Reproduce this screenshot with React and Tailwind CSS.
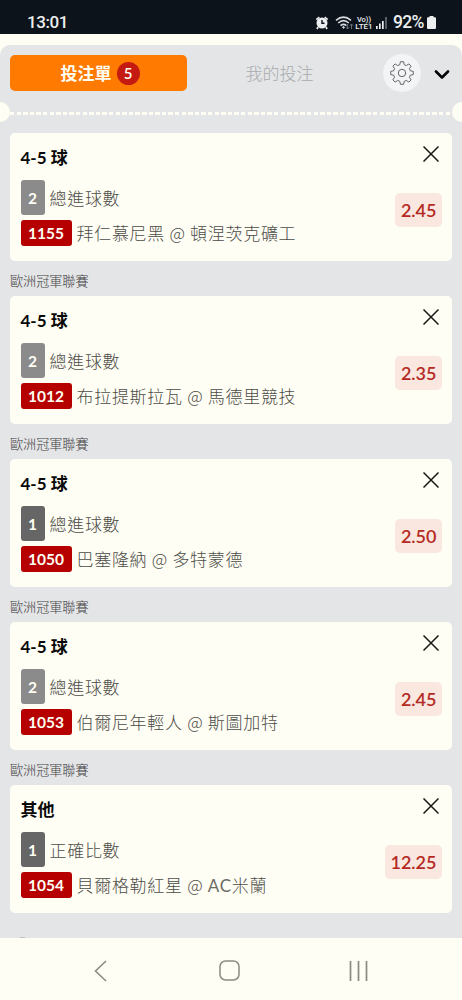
const bets = [
  { title: '4-5 球', count: 2, market: '總進球數', id: '1155', home: '拜仁慕尼黑', away: '頓涅茨克礦工', odds: '2.45' },
  { title: '4-5 球', count: 2, market: '總進球數', id: '1012', home: '布拉提斯拉瓦', away: '馬德里競技', odds: '2.35' },
  { title: '4-5 球', count: 1, market: '總進球數', id: '1050', home: '巴塞隆納', away: '多特蒙德', odds: '2.50' },
  { title: '4-5 球', count: 2, market: '總進球數', id: '1053', home: '伯爾尼年輕人', away: '斯圖加特', odds: '2.45' },
  { title: '其他', count: 1, market: '正確比數', id: '1054', home: '貝爾格勒紅星', away: 'AC米蘭', odds: '12.25' },
];

function gearPath() {
  const teeth = 8;
  const points = [];
  for (let i = 0; i < teeth; i++) {
    const base = (i * 360) / teeth;
    for (const [offset, r] of [[-15, 8.6], [-8, 11.4], [8, 11.4], [15, 8.6]]) {
      const a = ((base + offset) * Math.PI) / 180;
      points.push(`${(12 + r * Math.sin(a)).toFixed(2)} ${(12 - r * Math.cos(a)).toFixed(2)}`);
    }
  }
  return `M${points.join('L')}Z`;
}

function StatusBar() {
  return (
    <header className="flex h-[34px] shrink-0 items-start justify-between bg-[#0c131b] pt-[11px] pr-[26px] pl-[27px] font-['Roboto',sans-serif] text-[#eceeef]">
      <span className="text-[17px] leading-[23px] font-medium tracking-[-0.4px]">13:01</span>
      <div className="flex h-[23px] items-center">
        <svg className="mr-[6px]" width="14" height="14" viewBox="0 0 13 14" fill="none">
          <circle cx="6.5" cy="7" r="5.5" fill="#eceeef" />
          <path d="M.8 3.6 3.8 1.2M12.2 3.6 9.2 1.2M2.5 11 1.5 13M10.5 11l1 2" stroke="#eceeef" strokeWidth="1.7" />
          <path d="M6.5 4v3.3H9" stroke="#0c131b" strokeWidth="1.4" />
        </svg>
        <svg className="mr-[2px]" width="19" height="16" viewBox="0 0 19 16" fill="none" stroke="#d9dcde">
          <path d="M1 5.3Q8.5-1 16 5.3M3.2 8Q8.5 3.4 13.8 8M5.5 10.6Q8.5 8.2 11.4 10.6" strokeWidth="1.6" />
          <circle cx="8.5" cy="12.4" r=".8" fill="#d9dcde" />
          <path d="M12.6 9v5m-1.6-1.7 1.6 1.7 1.5-1.7M16.5 14V9m-1.5 1.7L16.5 9l1.5 1.7" stroke="#69727a" strokeWidth="1" />
        </svg>
        <div className="mr-[4px] flex w-[16px] flex-col items-center text-[8px] leading-[7px] font-medium whitespace-nowrap">
          <span className="text-[7.5px]">Vo))</span>
          <span>LTE1</span>
        </div>
        <svg className="mr-[6px]" width="11" height="12" viewBox="0 0 11 12">
          <path d="M0 9h1.7v3H0zM3 6.5h1.7V12H3zM6 4h1.7v8H6z" fill="#eceeef" />
          <path d="M9.2 0h1.6v12H9.2z" fill="#69727a" />
        </svg>
        <span className="mr-[2px] w-[32px] text-[17.5px] leading-[23px] font-medium tracking-[-0.7px]">92%</span>
        <svg width="9" height="13" viewBox="0 0 9 13">
          <path d="M2.5 0h4v1.2H8q1 0 1 1V12q0 1-1 1H1q-1 0-1-1V2.2q0-1 1-1h1.5z" fill="#eceeef" />
        </svg>
      </div>
    </header>
  );
}

function SlipHeader() {
  return (
    <div className="flex h-[56px] shrink-0 items-center pr-[11px] pl-[10px]">
      <button className="flex h-[36px] w-[177px] items-center justify-center rounded-[5px] bg-[#ff7a00] pl-[3px] text-[#fffdf2]">
        <span className="pt-[2px] text-[17px] font-bold">投注單</span>
        <span className="ml-[5px] flex size-[23px] items-center justify-center rounded-full bg-[#c41a12] text-[15px] font-semibold">5</span>
      </button>
      <button className="w-[185px] pt-[2px] text-center text-[17px] font-light text-[#a9abad]">我的投注</button>
      <button className="ml-[11px] flex size-[38px] items-center justify-center rounded-full bg-[#f3f4f6]">
        <svg width="24" height="24" viewBox="0 0 24 24" fill="none" stroke="#666" strokeWidth="1" strokeLinejoin="round">
          <path d={gearPath()} />
          <circle cx="12" cy="12" r="3.7" />
        </svg>
      </button>
      <svg className="mt-[3px] ml-[13px]" width="16" height="10" viewBox="0 0 16 10" fill="none" stroke="#050505" strokeWidth="2.6" strokeLinecap="round" strokeLinejoin="round">
        <path d="m2 1.5 6 6 6-6" />
      </svg>
    </div>
  );
}

function Perforation() {
  return (
    <div className="mt-px flex h-[20px] shrink-0 items-center justify-between overflow-hidden">
      <span className="-ml-[10px] size-[20px] shrink-0 rounded-full bg-[#fffef4]" />
      <span className="mt-[2px] h-[3px] flex-1 bg-[repeating-linear-gradient(90deg,#fffef4_0_4.5px,transparent_4.5px_6.6px)]" />
      <span className="-mr-[10px] size-[20px] shrink-0 rounded-full bg-[#fffef4]" />
    </div>
  );
}

function TeamName({ name }) {
  const [, latin, rest] = name.match(/^([A-Z]*)(.*)$/);
  return (
    <>
      {latin && <span className="font-['Lato',sans-serif] font-normal text-[#6c6c66]">{latin}</span>}
      {rest}
    </>
  );
}

function BetCard({ bet }) {
  return (
    <article className="flex h-[127.3px] shrink-0 justify-between rounded-[5px] bg-[#fffef4] pr-[10px] pl-[10.5px]">
      <div className="flex flex-col items-start pt-[12px]">
        <h2 className="h-[24px] text-[17px] leading-[25px] font-bold text-[#090909]">{bet.title}</h2>
        <div className="mt-[11px] flex h-[35px] items-center">
          <span className={`flex h-[35px] w-[24px] items-center justify-center rounded-[3px] pt-px text-[15.5px] font-bold text-[#fffef4] ${bet.count === 2 ? 'bg-[#8b8b8c]' : 'bg-[#656665]'}`}>{bet.count}</span>
          <span className="ml-[5px] h-[26px] font-['Noto_Sans_CJK_TC',sans-serif] text-[17px] leading-[25px] font-light tracking-[0.7px] text-[#4c4c48]">{bet.market}</span>
        </div>
        <div className="mt-[5px] flex h-[26px] items-center whitespace-nowrap">
          <span className="flex h-[26px] w-[51px] items-center justify-center rounded-[3px] bg-[#b60000] pt-px text-[15.5px] font-bold text-[#fffef4]">{bet.id}</span>
          <span className="ml-[5px] h-[26px] font-['Noto_Sans_CJK_TC',sans-serif] text-[17px] leading-[25px] font-light tracking-[0.7px] text-[#4c4c48]">
            {bet.home} @ <TeamName name={bet.away} />
          </span>
        </div>
      </div>
      <div className="flex flex-col items-end pt-[13px]">
        <svg className="mr-[3.5px]" width="16" height="16" viewBox="0 0 16 16" fill="none" stroke="#171714" strokeWidth="1.5">
          <path d="m.5.5 15 15m0-15-15 15" />
        </svg>
        <span className="mt-[31px] flex h-[34px] items-center rounded-[5px] bg-[#f9e7e0] px-[5.5px] text-[18px] font-semibold text-[#b42a23]">{bet.odds}</span>
      </div>
    </article>
  );
}

function NavBar() {
  return (
    <nav className="flex h-[62px] shrink-0 items-center bg-[#fffef4] pt-[3px] pl-[94px]">
      <svg width="13" height="22" viewBox="0 0 13 22" fill="none" stroke="#8b8a83" strokeWidth="1.6">
        <path d="M12 1 1.5 11 12 21" />
      </svg>
      <svg className="ml-[112px]" width="21" height="21" viewBox="0 0 21 21" fill="none" stroke="#8b8a83" strokeWidth="1.5">
        <rect x="1" y="1" width="19" height="19" rx="5.5" />
      </svg>
      <svg className="ml-[109px]" width="19" height="20" viewBox="0 0 19 20" fill="none" stroke="#8b8a83" strokeWidth="1.7">
        <path d="M1.5 0v20M9.5 0v20M17.5 0v20" />
      </svg>
    </nav>
  );
}

export default function App() {
  return (
    <div className="flex h-[1000px] w-[462px] flex-col overflow-hidden bg-[#fffef4] font-['Lato','Noto_Sans_CJK_TC',sans-serif]">
      <StatusBar />
      <main className="mt-[11px] flex h-[893px] shrink-0 flex-col overflow-hidden rounded-t-[10px] bg-[#e4e5e7]">
        <SlipHeader />
        <Perforation />
        <section className="mt-[11.3px] flex flex-col px-[10px]">
          {bets.map((bet, i) => (
            <div key={bet.id} className="flex flex-col">
              {i > 0 && <p className="h-[35.7px] pt-[2.5px] text-[13.1px] leading-[36px] font-light text-[#3f4042]">歐洲冠軍聯賽</p>}
              <BetCard bet={bet} />
            </div>
          ))}
        </section>
        <span className="mt-[24px] ml-[20px] h-px w-[5px] shrink-0 bg-[#bfc0c1]" />
      </main>
      <NavBar />
    </div>
  );
}
